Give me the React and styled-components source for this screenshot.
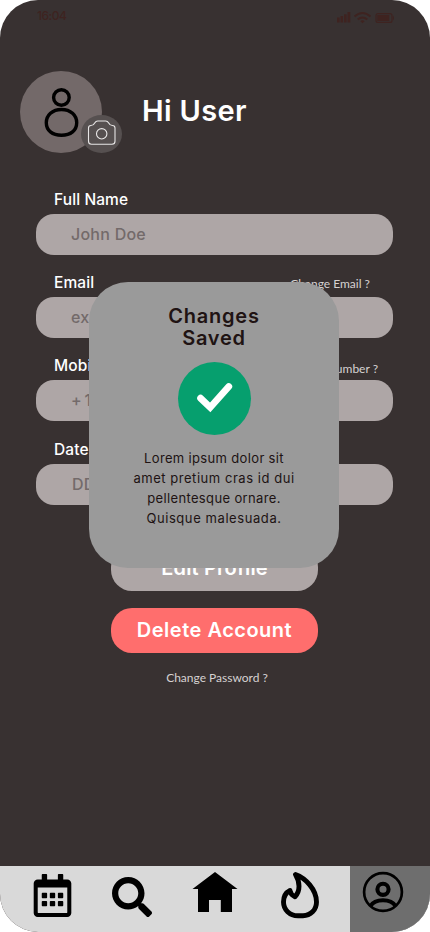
import React from "react";
import styled, { createGlobalStyle } from "styled-components";
import { FaRegCalendarAlt, FaSearch } from "react-icons/fa";

const GlobalStyle = createGlobalStyle`
  * { box-sizing: border-box; }
  body { margin: 0; background: #fff; }
  button, input { font: inherit; border: 0; margin: 0; padding: 0; }
  svg { display: block; }
`;

const Screen = styled.div`
  position: relative;
  display: flex;
  flex-direction: column;
  width: 430px;
  height: 932px;
  overflow: hidden;
  border-radius: 38px;
  background: #383131;
  color: #fff;
  font-family: Inter, "Open Sans", sans-serif;
`;

const StatusBar = styled.header`
  display: flex;
  justify-content: space-between;
  height: 71px;
  padding: 9px 35px 0 37px;
  color: #3e2320;
`;

const Time = styled.span`
  font-size: 12px;
  line-height: 14px;
  font-weight: 500;
  letter-spacing: -0.5px;
`;

const StatusIcons = styled.svg`
  width: 58px;
  height: 14px;
  margin-top: 1px;
`;

const Profile = styled.section`
  display: flex;
  align-items: center;
  height: 82px;
  padding-left: 20px;
`;

const Avatar = styled.div`
  position: relative;
  width: 82px;
  height: 82px;
  border-radius: 50%;
  background: #736969;
`;

const CameraBadge = styled.button`
  position: absolute;
  left: 61px;
  top: 44px;
  width: 41px;
  height: 38px;
  border-radius: 50%;
  background: #565050;
`;

const Greeting = styled.h1`
  margin: -2px 0 0 40px;
  font-size: 29px;
  line-height: 40px;
  font-weight: 600;
  letter-spacing: 0.35px;
`;

const Form = styled.form`
  display: grid;
  grid-template-rows: 83px 83px 84px 83px;
  padding: 19px 37px 0 36px;
`;

const Field = styled.div`
  display: flex;
  flex-direction: column;
`;

const FieldHead = styled.div`
  display: flex;
  justify-content: space-between;
  align-items: flex-start;
  height: 42px;
  padding: 17px ${(p) => p.$end || 23}px 0 18px;
`;

const Label = styled.label`
  font-size: 15.5px;
  line-height: 22px;
  font-weight: 500;
  white-space: nowrap;
  letter-spacing: 0.1px;
`;

const SmallLink = styled.a`
  color: #d6d2d2;
  font-family: Lato, sans-serif;
  font-size: 12px;
  line-height: 22px;
  font-weight: 400;
  white-space: nowrap;
  margin-top: ${(p) => p.$drop || 1}px;
`;

const Input = styled.input`
  width: 357px;
  height: 41px;
  padding: 0 0 2px ${(p) => p.$indent || 35}px;
  border-radius: 18px;
  background: #aea6a6;
  outline: none;
  font-size: 16px;
  font-weight: 500;
  letter-spacing: 0.25px;
  word-spacing: ${(p) => p.$gap || 0}px;
  &::placeholder { color: #736a6a; opacity: 1; }
`;

const Actions = styled.div`
  display: flex;
  flex-direction: column;
  align-items: center;
  gap: 17px;
  margin-top: 41px;
  padding-right: 1px;
`;

const ActionButton = styled.button`
  width: 207px;
  height: 45px;
  padding-bottom: 1px;
  border-radius: 21px;
  background: ${(p) => (p.$danger ? "#ff6e6d" : "#aea6a6")};
  color: #fff;
  font-size: 20px;
  font-weight: 600;
  letter-spacing: ${(p) => (p.$danger ? 0.5 : 0.15)}px;
`;

const PasswordLink = styled(SmallLink)`
  align-self: center;
  margin: 14px 0 0 4px;
`;

const Nav = styled.nav`
  display: grid;
  grid-template-columns: 93px 79px 86px 92px 80px;
  height: 66px;
  margin-top: auto;
  background: #d9d9d9;
  color: #000;
`;

const NavItem = styled.button`
  display: flex;
  align-items: flex-start;
  justify-content: flex-start;
  padding: ${(p) => p.$pad};
  background: ${(p) => (p.$active ? "#6e6e6e" : "transparent")};
  color: inherit;
`;

const Dialog = styled.div`
  position: absolute;
  left: 89px;
  top: 282px;
  width: 250px;
  height: 286px;
  display: flex;
  flex-direction: column;
  align-items: center;
  padding-top: 23px;
  border-radius: 39px;
  background: #9a9a9a;
  color: #201313;
  text-align: center;
`;

const DialogTitle = styled.h2`
  margin: 0;
  font-size: 20px;
  line-height: 22px;
  font-weight: 600;
  letter-spacing: 0.75px;
`;

const CheckCircle = styled.div`
  width: 73px;
  height: 73px;
  margin-top: 13px;
  border-radius: 50%;
  background: #069f6e;
`;

const DialogText = styled.p`
  margin: 13px 0 0;
  font-size: 13px;
  line-height: 20px;
  white-space: nowrap;
`;

const TextLine = styled.span`
  display: block;
  letter-spacing: ${(p) => p.$spacing || 0}px;
`;

const fields = [
  { label: "Full Name", placeholder: "John Doe" },
  { label: "Email", placeholder: "example@example.com", link: "Change Email ?" },
  { label: "Mobile Number", placeholder: "+ 123 456 789", link: "Change Number ?", end: 15, drop: 3, gap: -2 },
  { label: "Date Of Birth", placeholder: "DD / MM / YYYY", indent: 36 },
];

function UserIcon() {
  return (
    <svg width="82" height="82" viewBox="0 0 82 82" fill="none" stroke="#000" strokeWidth="3.4">
      <circle cx="41.4" cy="26.5" r="7.8" />
      <path d="M41.5 38.5c9.2 0 15.2 5.8 15.2 13.2 0 7.7-6 12.6-15.2 12.6s-15.2-4.9-15.2-12.6c0-7.4 6-13.2 15.2-13.2Z" />
    </svg>
  );
}

function CameraIcon() {
  return (
    <svg width="41" height="38" viewBox="0 0 41 38" fill="none" stroke="#e8e6e6" strokeWidth="1.1">
      <path d="M10 10.5q2.5 0 3.7-2.5 1.2-2 3-2h8q1.8 0 3 2 1.2 2.5 3.7 2.5 2.6 0 2.6 2.5v13.2q0 3-3 3H10.5q-3 0-3-3V13q0-2.5 2.5-2.5Z" />
      <circle cx="20.7" cy="18.8" r="5.2" />
    </svg>
  );
}

export default function App() {
  return (
    <>
      <GlobalStyle />
      <Screen>
        <StatusBar>
          <Time>16:04</Time>
          <StatusIcons viewBox="0 0 58 14" fill="currentColor">
            <path d="M0 7.5h2.6v5H0zM3.5 6h2.6v6.5H3.5zM7 4.2h2.6v8.3H7zM10.5 2h2.8v10.5h-2.8z" />
            <g fill="none" stroke="currentColor" strokeWidth="2.1">
              <path d="M17.5 6.5q8-7 16 0M20.7 9.5q4.800-4 9.600 0" />
              <rect x="39" y="3.6" width="16" height="8.8" rx="2" strokeWidth="1.2" />
            </g>
            <path d="m23.3 11.2q2.2-1.7 4.4 0L25.5 13.2zM40.3 4.9h12v6.2h-12zM56 5.5q2 2.5 0 5z" />
          </StatusIcons>
        </StatusBar>

        <Profile>
          <Avatar>
            <UserIcon />
            <CameraBadge type="button" aria-label="Change photo">
              <CameraIcon />
            </CameraBadge>
          </Avatar>
          <Greeting>Hi User</Greeting>
        </Profile>

        <Form>
          {fields.map((f) => (
            <Field key={f.label}>
              <FieldHead $end={f.end}>
                <Label>{f.label}</Label>
                {f.link && <SmallLink $drop={f.drop}>{f.link}</SmallLink>}
              </FieldHead>
              <Input $indent={f.indent} $gap={f.gap} placeholder={f.placeholder} />
            </Field>
          ))}
        </Form>

        <Actions>
          <ActionButton type="button">Edit Profile</ActionButton>
          <ActionButton type="button" $danger>Delete Account</ActionButton>
        </Actions>
        <PasswordLink>Change Password ?</PasswordLink>

        <Nav>
          <NavItem $pad="8px 0 0 31px" aria-label="Calendar">
            <FaRegCalendarAlt size={43} />
          </NavItem>
          <NavItem $pad="11px 0 0 19px" aria-label="Search">
            <FaSearch size={40} />
          </NavItem>
          <NavItem $pad="6px 0 0 20px" aria-label="Home">
            <svg width="46" height="42" viewBox="0 0 46 42">
              <path d="M23 0 45.5 17H40v23H28.8V28H17v12H6V17H.5Z" />
            </svg>
          </NavItem>
          <NavItem $pad="5px 0 0 22px" aria-label="Trending">
            <svg width="40" height="48" viewBox="0 0 40 48" fill="none" stroke="#000" strokeWidth="4.9" strokeLinejoin="round">
              <path d="M15.5 3.5C25.5 7 36.5 18.5 36.5 31 36.5 39 30.5 44.7 23 44.7h-5C9.500 44.7 3.5 38.5 3.5 31 3.5 25 6 21.5 10 19.5c.3 2.5 2 4.8 5 6.2C20.5 20 20 11 15.5 3.5Z" />
            </svg>
          </NavItem>
          <NavItem $active $pad="5px 0 0 12px" aria-label="Profile">
            <svg width="42" height="42" viewBox="0 0 42 42" fill="none" stroke="#000">
              <circle cx="21" cy="21" r="18.9" strokeWidth="2.7" />
              <circle cx="21" cy="18.3" r="5.6" strokeWidth="4.1" />
              <path d="M8.5 35C13 27.3 29 27.3 33.5 35" strokeWidth="4" />
            </svg>
          </NavItem>
        </Nav>

        <Dialog role="dialog">
          <DialogTitle>
            Changes
            <br />
            Saved
          </DialogTitle>
          <CheckCircle>
            <svg width="73" height="73" viewBox="0 0 73 73" fill="none" stroke="#fff" strokeWidth="6.8" strokeLinecap="round">
              <path d="m22.6 36.2 9.6 9.2L50.8 24.6" />
            </svg>
          </CheckCircle>
          <DialogText>
            <TextLine $spacing={0.34}>Lorem ipsum dolor sit</TextLine>
            <TextLine $spacing={0.54}>amet pretium cras id dui</TextLine>
            <TextLine $spacing={0.36}>pellentesque ornare.</TextLine>
            <TextLine $spacing={0.58}>Quisque malesuada.</TextLine>
          </DialogText>
        </Dialog>
      </Screen>
    </>
  );
}
